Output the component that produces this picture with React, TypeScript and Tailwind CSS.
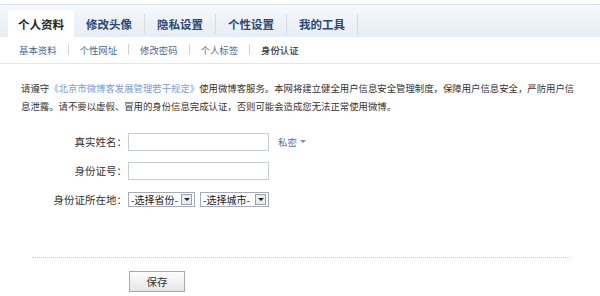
const tabs = ["修改头像", "隐私设置", "个性设置", "我的工具"];
const subTabs = ["基本资料", "个性网址", "修改密码", "个人标签"];

const FakeSelect = ({ label, width }: { label: string; width: string }) => (
  <div className={`${width} h-[15px] border border-[#a5acb5] bg-white flex items-center justify-between pl-[2px] pr-[2px]`}>
    <span className="text-[10px] leading-none text-[#222]">{label}</span>
    <span className="w-[11px] h-[11px] border border-[#9aa3ad] bg-[#e9ecef] flex items-center justify-center">
      <span className="w-0 h-0 border-l-[3px] border-r-[3px] border-t-[3px] border-l-transparent border-r-transparent border-t-[#222]"></span>
    </span>
  </div>
);

const App = () => {
  return (
    <div className="w-[600px] h-[296px] overflow-hidden bg-white text-[#333] font-['Noto_Sans_CJK_SC','Noto_Sans',sans-serif]">
      {/* Main tabs */}
      <div className="mt-[4px] h-[33px] border-t border-[#dde3ec] bg-gradient-to-b from-[#f6f8fb] to-[#e7edf5] flex items-end pl-[8px]">
        <div className="w-[66px] h-[27px] bg-white flex items-center justify-center pt-[2px] text-[11.5px] font-bold text-[#222]">
          个人资料
        </div>
        {tabs.map((t) => (
          <div key={t} className="flex items-center h-[27px]">
            <div className="w-[70px] flex items-center justify-center pt-[2px] text-[11.5px] font-bold text-[#2c4874]">
              {t}
            </div>
            <span className="w-px h-[20px] bg-[#d3dbe6]"></span>
          </div>
        ))}
      </div>

      {/* Sub tabs */}
      <div className="h-[27px] border-b border-[#e4e6ea] flex items-center pl-[19px] text-[9.4px]">
        {subTabs.map((t) => (
          <div key={t} className="flex items-center">
            <span className="text-[#4a6794]">{t}</span>
            <span className="mx-[11px] w-px h-[11px] bg-[#d0d4da]"></span>
          </div>
        ))}
        <span className="text-[#333] font-medium">身份认证</span>
      </div>

      {/* Notice */}
      <div className="mt-[15px] pl-[21px] text-[9.4px] leading-[18px] whitespace-nowrap text-[#333]">
        <p>
          请遵守<span className="text-[#7d9bcd]">《北京市微博客发展管理若干规定》</span>使用微博客服务。本网将建立健全用户信息安全管理制度，保障用户信息安全，严防用户信
        </p>
        <p>息泄露。请不要以虚假、冒用的身份信息完成认证，否则可能会造成您无法正常使用微博。</p>
      </div>

      {/* Form */}
      <div className="mt-[18px] flex flex-col text-[10.5px]">
        <div className="flex items-center h-[18px]">
          <label className="w-[128px] text-right pr-[1px]">真实姓名：</label>
          <div className="w-[141px] h-[18px] border border-[#c9cdd2] bg-white"></div>
          <span className="ml-[9px] flex items-center gap-[3px] text-[9.4px] text-[#4b72ad]">
            私密
            <span className="w-0 h-0 border-l-[3px] border-r-[3px] border-t-[3px] border-l-transparent border-r-transparent border-t-[#7f8fa6]"></span>
          </span>
        </div>
        <div className="flex items-center h-[18px] mt-[11px]">
          <label className="w-[128px] text-right pr-[1px]">身份证号：</label>
          <div className="w-[141px] h-[18px] border border-[#c9cdd2] bg-white"></div>
        </div>
        <div className="flex items-center h-[15px] mt-[12px]">
          <label className="w-[128px] text-right pr-[1px]">身份证所在地：</label>
          <FakeSelect label="-选择省份-" width="w-[67px]" />
          <div className="w-[5px]"></div>
          <FakeSelect label="-选择城市-" width="w-[69px]" />
        </div>
      </div>

      {/* Divider */}
      <div className="mt-[50px] ml-[32px] w-[538px] border-t border-dotted border-[#c8c8c8]"></div>

      {/* Save */}
      <div className="mt-[13px] pl-[129px]">
        <button className="w-[56px] h-[21px] border border-[#a9a9a9] bg-gradient-to-b from-[#fdfdfd] to-[#e6e6e6] text-[10.5px] text-[#333] flex items-center justify-center">
          保存
        </button>
      </div>
    </div>
  );
};

export default App;
